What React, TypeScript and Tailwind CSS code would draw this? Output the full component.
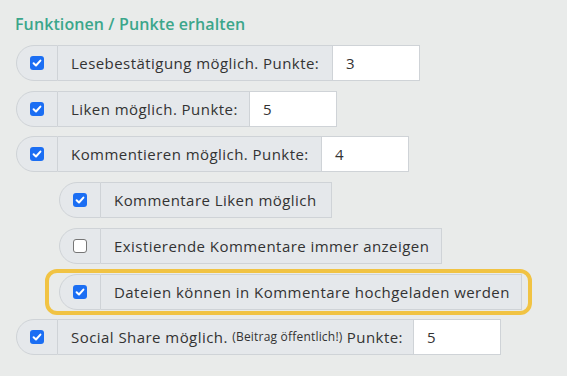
import React from "react";

const font = { fontFamily: '"Open Sans", "Liberation Sans", sans-serif' };

function Check({ checked }: { checked: boolean }) {
  if (checked) {
    return (
      <span className="flex h-[14px] w-[14px] items-center justify-center rounded-[3px] bg-[#1b6ef3]">
        <svg width="10" height="10" viewBox="0 0 10 10">
          <path d="M1.6 5.2 L4 7.5 L8.4 2.6" fill="none" stroke="#fff" strokeWidth="2" strokeLinecap="round" strokeLinejoin="round" />
        </svg>
      </span>
    );
  }
  return <span className="block h-[14px] w-[14px] rounded-[3px] border border-[#767676] bg-white" />;
}

function Row({
  checked,
  label,
  labelW,
  value,
  className = "",
}: {
  checked: boolean;
  label: React.ReactNode;
  labelW: number;
  value?: string;
  className?: string;
}) {
  return (
    <div className={"flex h-[36px] " + className}>
      <div className="flex w-[42px] items-center justify-center rounded-l-[18px] border border-[#cfd3d7] bg-[#e5e8eb]">
        <Check checked={checked} />
      </div>
      <div
        className="flex items-center border-y border-r border-[#cfd3d7] bg-[#e5e8eb] pl-[13px] text-[15px] tracking-[0.45px] text-[#333] whitespace-nowrap"
        style={{ width: labelW }}
      >
        {label}
      </div>
      {value !== undefined && (
        <div className="flex w-[87px] items-center border-y border-r border-[#cfd3d7] bg-white pl-[13px] text-[15px] text-[#333]">
          {value}
        </div>
      )}
    </div>
  );
}

export default function App() {
  return (
    <div className="h-[376px] w-[567px] bg-[#e9ebea] pl-[15px] pt-[12px]" style={font}>
      <div className="text-[16px] font-semibold leading-[24px] tracking-[0.1px] text-[#3ba68b]">Funktionen / Punkte erhalten</div>
      <div className="mt-[9px] pl-px">
        <Row checked label="Lesebestätigung möglich. Punkte:" labelW={275} value="3" />
        <Row className="mt-[10px]" checked label="Liken möglich. Punkte:" labelW={192} value="5" />
        <Row className="mt-[9px]" checked label="Kommentieren möglich. Punkte:" labelW={264} value="4" />
        <div className="pl-[43px]">
          <Row className="mt-[10px]" checked label="Kommentare Liken möglich" labelW={231} />
          <Row className="mt-[10px]" checked={false} label="Existierende Kommentare immer anzeigen" labelW={341} />
          <div className="relative mt-[10px] w-fit">
            <span className="pointer-events-none absolute -bottom-[5px] -left-[14px] -right-[10px] -top-[5px] rounded-[12px] border-4 border-[#f1c343]" />
            <Row checked label="Dateien können in Kommentare hochgeladen werden" labelW={421} />
          </div>
        </div>
        <Row
          className="mt-[9px]"
          checked
          label={
            <>
              Social Share möglich.&nbsp;<span className="text-[12px] tracking-[0.2px]">(Beitrag öffentlich!)</span>&nbsp;Punkte:
            </>
          }
          labelW={356}
          value="5"
        />
      </div>
    </div>
  );
}
